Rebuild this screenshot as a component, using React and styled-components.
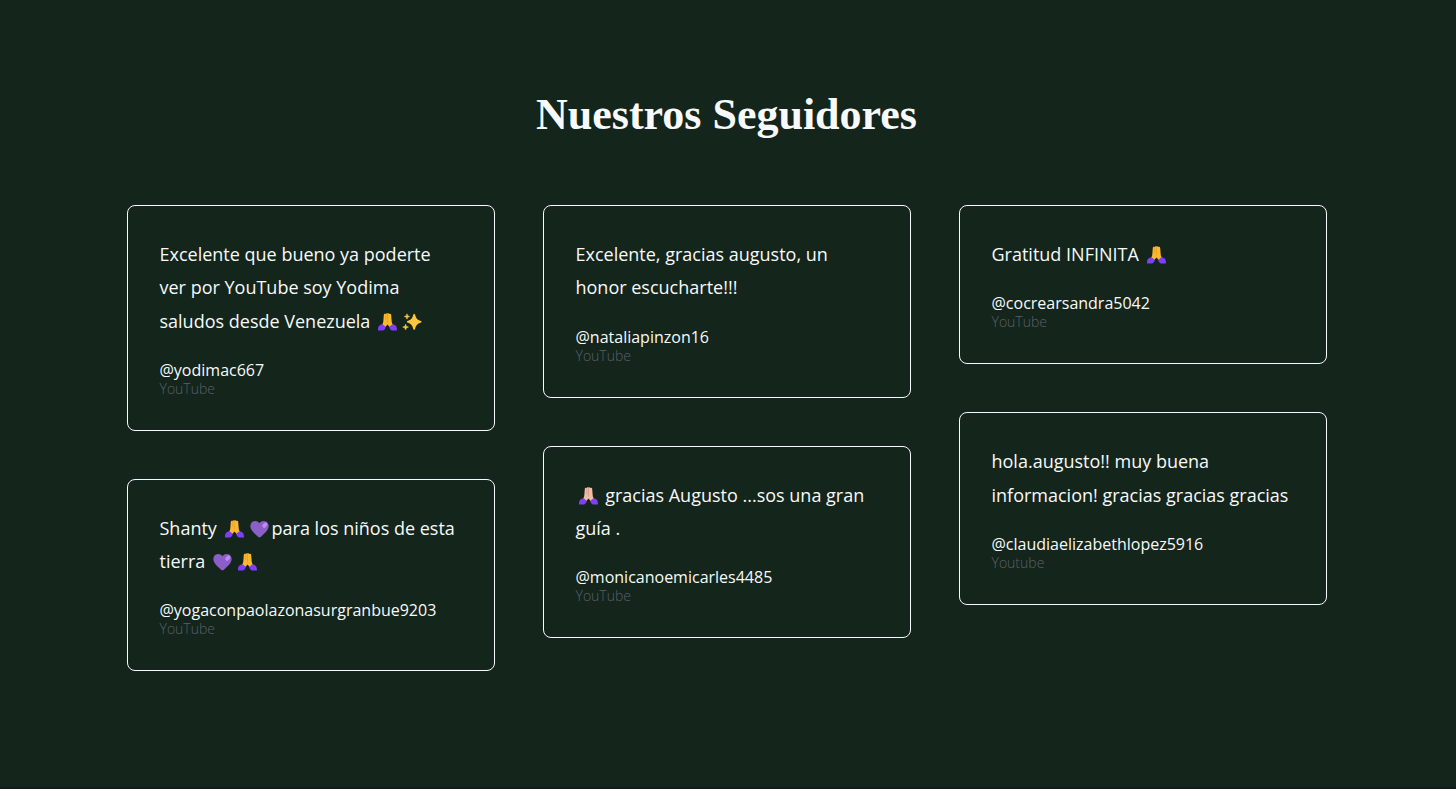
import React from "react";
import styled, { createGlobalStyle } from "styled-components";

const GlobalStyle = createGlobalStyle`
  *, *::before, *::after { box-sizing: border-box; }
  body {
    margin: 0;
    background: #15181c;
    color: #f8f9fa;
    font-family: "Open Sans", "Noto Sans", sans-serif;
  }
`;

const Section = styled.section`
  padding: 83px 3px 116px 0;
  background: #14251c;
`;

const Container = styled.div`
  max-width: 1200px;
  margin: 0 auto;
`;

const Title = styled.h2`
  margin: 0 0 58px;
  font-family: "Liberation Serif", serif;
  font-size: 44px;
  font-weight: 700;
  line-height: 64px;
  text-align: center;
`;

const Columns = styled.div`
  display: grid;
  grid-template-columns: repeat(3, minmax(0, 1fr));
  gap: 48px;
  align-items: start;

  @media (max-width: 900px) {
    grid-template-columns: minmax(0, 1fr);
    padding: 0 24px;
  }
`;

const Column = styled.div`
  display: flex;
  flex-direction: column;
  gap: 48px;
`;

const Card = styled.figure`
  margin: 0;
  padding: 32px;
  border: 1px solid #f8f9fa;
  border-radius: 8px;
`;

const Quote = styled.blockquote`
  margin: 0 0 23px;
  font-size: 18px;
  line-height: 1.85;
`;

const Author = styled.figcaption`
  display: flex;
  flex-direction: column;
`;

const Handle = styled.span`
  font-size: 16px;
  line-height: 19px;
`;

const Source = styled.span`
  color: #5a6068;
  font-size: 14px;
  font-weight: 300;
  line-height: 18px;
`;

const Glyph = styled.svg`
  width: 25px;
  height: 18px;
  vertical-align: -3px;
`;

function Hands({ skin = "#fdb92c", shade = "#e8922a" }) {
  return (
    <Glyph viewBox="0 0 25 18" role="img" aria-label="manos juntas">
      <path d="M8.800 2c0-1.300 1.500-1.700 2-1 .3-.9 1.400-.9 1.700-.3.300-.6 1.400-.6 1.700.3.500-.7 2-.3 2 1l.5 6.500c.1 1.200.5 2.300 1.200 3.100l-2.700 3-2.700-3.200-2.700 3.200-2.700-3c.7-.8 1.100-1.900 1.200-3.100z" fill={skin} />
      <path d="M12.500 1v8M10.700 1.600v5" fill="none" stroke={shade} strokeWidth=".6" strokeLinecap="round" />
      <path d="M3.100 17.500c-.3-3 .8-5.600 3.500-5.900.8-.1 1.400 0 2 .5l1.600 1.300c.5.400.6.900.3 1.500-.7 1.700-1.900 2.600-3.700 2.600z" fill="#7f3ff5" />
      <path d="M21.900 17.500c.3-3-.8-5.600-3.500-5.900-.8-.1-1.400 0-2 .5l-1.600 1.300c-.5.400-.6.900-.3 1.500.7 1.700 1.900 2.600 3.700 2.600z" fill="#7f3ff5" />
    </Glyph>
  );
}

function Heart() {
  return (
    <Glyph viewBox="0 0 25 18" role="img" aria-label="corazón morado">
      <path d="M12.500 3.300C10.500.1 5.900.2 4.100 3.200c-3 5.200 3.400 10.300 7.200 13.700.7.600 1.700.6 2.400 0 3.800-3.400 10.200-8.500 7.200-13.700-1.800-3-6.400-3.100-8.400.1z" fill="#8b5fc7" />
      <ellipse cx="17.800" cy="5.200" rx="2" ry="2.900" transform="rotate(35 17.800 5.200)" fill="#c08af0" />
    </Glyph>
  );
}

function Sparkles() {
  return (
    <Glyph viewBox="0 0 25 18" role="img" aria-label="destellos">
      <path d="M14.200.8c.4 0 .7.2.8.6 1.200 4 2.100 5.100 6 6.600.7.300.7 1.300 0 1.600-3.900 1.500-4.800 2.600-6 6.600-.2.800-1.400.8-1.600 0-1.200-4-2.100-5.100-6-6.600-.7-.3-.7-1.300 0-1.600 3.900-1.500 4.800-2.600 6-6.600.1-.4.400-.6.800-.6z" fill="#fcc63a" />
      <path d="M7 .8l.8 1.900 1.900.8-1.900.8L7 6.200l-.8-1.900-1.900-.8 1.900-.8zM5.600 11.200l.8 2.100 2.100.8-2.100.8-.8 2.100-.8-2.100-2.100-.8 2.100-.8z" fill="#fcc63a" stroke="#fcc63a" strokeWidth=".5" strokeLinejoin="round" />
    </Glyph>
  );
}

function Testimonial({ handle, source = "YouTube", children }) {
  return (
    <Card>
      <Quote>{children}</Quote>
      <Author>
        <Handle>{handle}</Handle>
        <Source>{source}</Source>
      </Author>
    </Card>
  );
}

export default function App() {
  return (
    <>
      <GlobalStyle />
      <Section aria-labelledby="seguidores">
        <Container>
          <Title id="seguidores">Nuestros Seguidores</Title>
          <Columns>
            <Column>
              <Testimonial handle="@yodimac667">
                Excelente que bueno ya poderte ver por YouTube soy Yodima saludos desde Venezuela{" "}
                <Hands /><Sparkles />
              </Testimonial>
              <Testimonial handle="@yogaconpaolazonasurgranbue9203">
                Shanty <Hands /><Heart />para los niños de esta tierra <Heart /><Hands />
              </Testimonial>
            </Column>
            <Column>
              <Testimonial handle="@nataliapinzon16">
                Excelente, gracias augusto, un honor escucharte!!!
              </Testimonial>
              <Testimonial handle="@monicanoemicarles4485">
                <Hands skin="#efbfa5" shade="#c98f78" /> gracias Augusto ...sos una gran guía .
              </Testimonial>
            </Column>
            <Column>
              <Testimonial handle="@cocrearsandra5042">
                Gratitud INFINITA <Hands />
              </Testimonial>
              <Testimonial handle="@claudiaelizabethlopez5916" source="Youtube">
                hola.augusto!! muy buena informacion! gracias gracias gracias
              </Testimonial>
            </Column>
          </Columns>
        </Container>
      </Section>
    </>
  );
}
